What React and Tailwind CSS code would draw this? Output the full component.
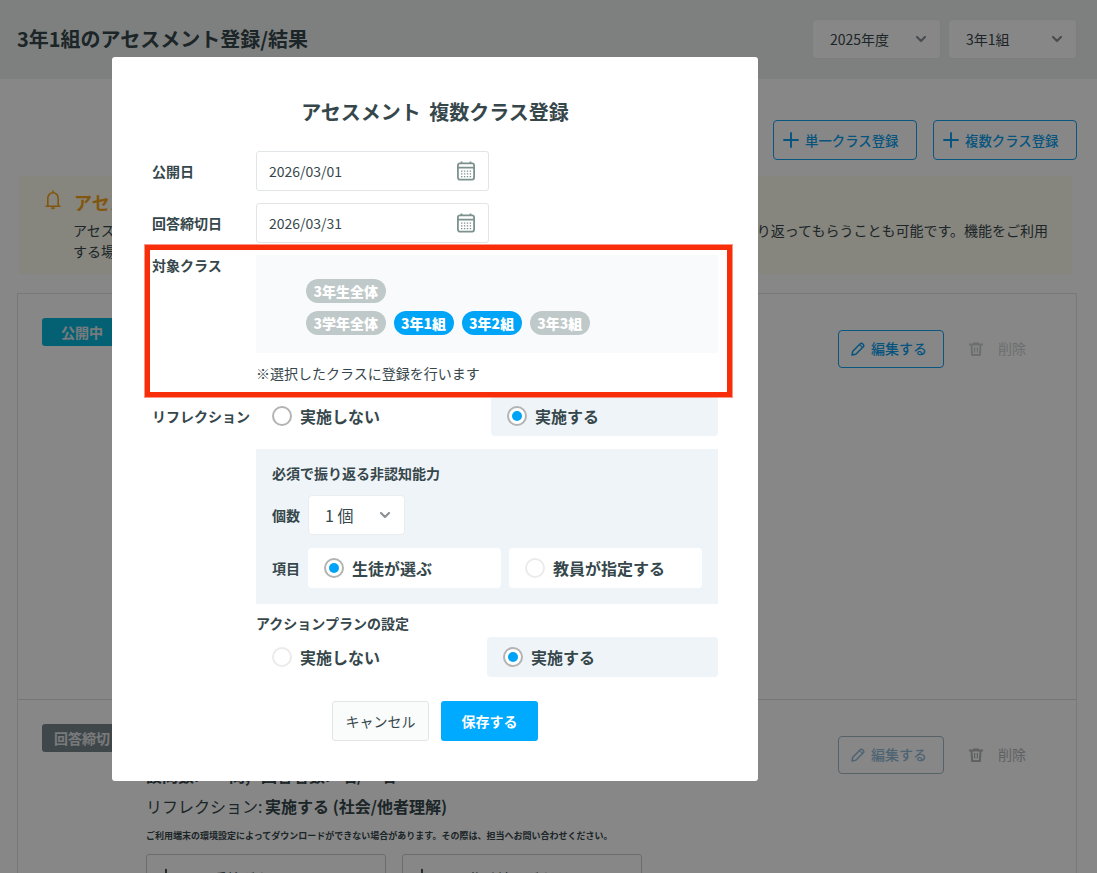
import React, { useState } from 'react';
import { ChevronDown, Download, Plus } from 'lucide-react';

const CalendarIcon = () => (
  <svg className="w-5 h-5 text-[#7d918f]" viewBox="0 0 20 20" fill="none" stroke="currentColor">
    <rect x="1.9" y="2.4" width="16.2" height="16.2" rx="2" strokeWidth="1.8" />
    <path d="M5.5 0.4v2M14.5 0.4v2M2 6.6h16" strokeWidth="1.8" />
    <path d="M5 10.2h10.5M5 12.9h10.5M5 15.6h10.5" strokeWidth="1.3" strokeDasharray="1.4 1.5" />
  </svg>
);

const BellIcon = () => (
  <svg className="w-4 h-5 text-[#f5a31a]" viewBox="0 0 16 20" fill="none" stroke="currentColor" strokeWidth="1.6">
    <path d="M0.5 16.2h15M2.8 16V8a5.2 5.2 0 0 1 10.4 0v8M8 0.6v2" />
    <path d="M6.3 18.2h3.4" strokeWidth="1.8" />
  </svg>
);

const PencilIcon = () => (
  <svg className="w-3.5 h-3.5" viewBox="0 0 14 14" fill="none" stroke="currentColor" strokeWidth="1.5" strokeLinejoin="round">
    <path d="M1 13l.8-3.8 7.4-7.5a1.6 1.6 0 0 1 2.3 0l.8.8a1.6 1.6 0 0 1 0 2.3L4.8 12.2 1 13z" />
    <path d="M8.6 2.6l2.8 2.8" strokeWidth="1.1" />
  </svg>
);

const TrashIcon = () => (
  <svg className="w-3.5 h-3.5" viewBox="0 0 14 14" fill="none" stroke="currentColor" strokeWidth="2">
    <path d="M0 2.4h14M4 1.6h6M2.5 2.8l.6 10.2h7.8l.6-10.2" />
    <path d="M5.6 5v5.5M8.4 5v5.5" strokeWidth="1.3" />
  </svg>
);

const Select = ({ value, className = '' }) => (
  <button className={`flex items-center justify-between bg-white border border-[#e9edee] rounded h-10 pr-[11px] ${className}`}>
    <span className="pb-px">{value}</span>
    <ChevronDown className="w-4 h-4 text-[#8b9296]" strokeWidth={3.2} />
  </button>
);

const AddButton = ({ label }) => (
  <button className="flex items-center h-10 w-36 pl-[5px] border border-[#12a4f2] rounded text-[#0d9fee] text-[13.4px] font-medium">
    <Plus className="w-6 h-6 mr-0.5" strokeWidth={1.9} />
    {label}
  </button>
);

const CardActions = ({ editable }) => (
  <div className="flex">
    <button
      className={`flex items-center h-[38px] w-[106px] pl-3 gap-1.5 border rounded text-sm font-medium ${
        editable ? 'border-[#12a4f2] text-[#0d9fee]' : 'border-[#a3b7c4] text-[#93bdd9]'
      }`}
    >
      <PencilIcon />
      <span className="pb-0.5">編集する</span>
    </button>
    <button className={`flex items-center h-[38px] w-[100px] ml-2 pl-[17px] gap-[15px] text-sm ${editable ? 'text-[#cdd2d4]' : 'text-[#b3b9bc]'}`}>
      <TrashIcon />
      <span className="pb-0.5">削除</span>
    </button>
  </div>
);

const DateInput = ({ value }) => (
  <div className="flex items-center justify-between w-[233px] h-10 pl-3 pr-3 border border-[#e2e5e7] rounded-[3px] bg-white text-sm">
    <span>{value}</span>
    <CalendarIcon />
  </div>
);

const Radio = ({ label, checked, faint, onChange, className = '' }) => (
  <button onClick={onChange} className={`flex items-center h-10 pl-4 rounded text-base font-bold ${className}`}>
    <span
      className={`w-5 h-5 mr-2 rounded-full bg-white flex items-center justify-center ${
        faint && !checked ? 'border-2 border-[#ebebeb]' : 'border-2 border-[#b3b3b3]'
      }`}
    >
      {checked && <span className="w-2.5 h-2.5 rounded-full bg-[#00a3f5]" />}
    </span>
    {label}
  </button>
);

const ClassTag = ({ label, selected, onClick }) => (
  <button
    onClick={onClick}
    className={`h-6 px-[7.5px] rounded-full text-sm leading-6 font-black text-white ${selected ? 'bg-[#00a5f7]' : 'bg-[#bfc9c9]'}`}
  >
    {label}
  </button>
);

const FieldLabel = ({ children }) => <div className="w-[104px] shrink-0 text-sm font-bold">{children}</div>;

const DownloadButton = ({ label }) => (
  <button className="flex items-center w-60 h-12 pl-2 gap-9 border border-[#c9ced1] rounded-[3px] text-sm">
    <Download className="w-[22px] h-[22px]" />
    {label}
  </button>
);

const AssessmentPage = () => (
  <div>
    <header className="flex items-start justify-between h-[79px] pl-[17px] pr-5 pt-[19px] bg-[#edf1ef]">
      <h1 className="text-xl leading-10 font-bold">3年1組のアセスメント登録/結果</h1>
      <div className="flex gap-[7px] text-sm">
        <Select value="2025年度" className="w-[129px] pl-[17px]" />
        <Select value="3年1組" className="w-[129px] pl-[17px]" />
      </div>
    </header>

    <div className="flex justify-end gap-4 pt-[41px] pr-5">
      <AddButton label="単一クラス登録" />
      <AddButton label="複数クラス登録" />
    </div>

    <section className="flex ml-[19px] mr-[25px] mt-4 h-[98px] pl-[26px] pr-6 pt-[14px] bg-[#fdfbee]">
      <BellIcon />
      <div className="ml-3 flex-1">
        <h2 className="pl-px text-lg leading-6 font-bold text-[#f5a31a]">アセスメントの登録</h2>
        <div className="flex justify-between text-sm leading-[21px] mt-1.5 whitespace-nowrap">
          <p>
            アセスメントを
            <br />
            する場合は
          </p>
          <p>り返ってもらうことも可能です。機能をご利用</p>
        </div>
      </div>
    </section>

    <main className="ml-[17px] mr-5 mt-[19px] border border-[#e2e5e6]">
      <section className="flex items-start justify-between h-[406px] border-b border-[#dcdfe0] pt-6 pl-6 pr-6">
        <span className="w-20 h-7 rounded-[3px] bg-[#08b8dc] text-[#e3e9ec] text-sm leading-7 font-bold text-center">公開中</span>
        <div className="pt-3">
          <CardActions editable />
        </div>
      </section>
      <section className="h-[260px] pt-6 pl-6 pr-6">
        <div className="flex items-start justify-between h-[40px]">
          <span className="w-[94px] h-7 pl-3 rounded-[3px] bg-[#7a878d] text-[#e3e6e8] text-sm leading-7 font-bold">回答締切</span>
          <div className="pt-3">
            <CardActions />
          </div>
        </div>
        <div className="ml-[104px]">
          <p className="flex text-base leading-[22px] font-bold">
            <span className="w-[83px]">設問数:</span>
            <span className="w-8">問,</span>
            <span className="w-20">回答者数:</span>
            <span className="w-[39px]">名/</span>
            <span>名</span>
          </p>
          <p className="text-base leading-6 mt-2">
            リフレクション: <b className="-ml-px">実施する (社会/他者理解)</b>
          </p>
          <p className="text-[9px] leading-4 mt-2.5 font-bold">
            ご利用端末の環境設定によってダウンロードができない場合があります。その際は、担当へお問い合わせください。
          </p>
          <div className="flex gap-4 mt-2.5">
            <DownloadButton label="受検ダウンロード" />
            <DownloadButton label="集計結果ダウンロード" />
          </div>
        </div>
      </section>
    </main>
  </div>
);

const RegisterModal = () => {
  const [selected, setSelected] = useState(['3年1組', '3年2組']);
  const [reflection, setReflection] = useState(true);
  const [chooser, setChooser] = useState('student');
  const [actionPlan, setActionPlan] = useState(true);

  const toggleClass = (name) => {
    setSelected((prev) => (prev.includes(name) ? prev.filter((n) => n !== name) : [...prev, name]));
  };

  return (
    <div className="relative w-[646px] h-[724px] px-10 pt-10 bg-white rounded-[3px]">
      <h2 className="text-center text-xl leading-[30px] font-bold [word-spacing:4px]">アセスメント 複数クラス登録</h2>

      <div className="flex items-center mt-6">
        <FieldLabel>公開日</FieldLabel>
        <DateInput value="2026/03/01" />
      </div>
      <div className="flex items-center mt-3">
        <FieldLabel>回答締切日</FieldLabel>
        <DateInput value="2026/03/31" />
      </div>

      <div className="flex mt-3 h-[141px]">
        <FieldLabel>対象クラス</FieldLabel>
        <div className="flex-1">
          <div className="h-[98px] pt-6 pl-[50px] bg-[#f9fafc]">
            <div className="flex">
              <ClassTag label="3年生全体" selected={selected.includes('3年生全体')} onClick={() => toggleClass('3年生全体')} />
            </div>
            <div className="flex gap-2 mt-2">
              {['3学年全体', '3年1組', '3年2組', '3年3組'].map((name) => (
                <ClassTag key={name} label={name} selected={selected.includes(name)} onClick={() => toggleClass(name)} />
              ))}
            </div>
          </div>
          <p className="mt-2.5 text-sm">※選択したクラスに登録を行います</p>
        </div>
      </div>

      <div className="flex items-center">
        <FieldLabel>リフレクション</FieldLabel>
        <Radio label="実施しない" checked={!reflection} onChange={() => setReflection(false)} className="w-[235px]" />
        <Radio label="実施する" checked={reflection} onChange={() => setReflection(true)} className="flex-1 bg-[#eff4f8]" />
      </div>

      <div className="ml-[104px] mt-[13px] h-[155px] pl-4 pt-[14px] bg-[#eff4f8]">
        <p className="text-sm font-bold">必須で振り返る非認知能力</p>
        <div className="flex items-center mt-3">
          <span className="w-9 text-sm font-bold">個数</span>
          <Select value="1 個" className="w-[97px] pl-4" />
        </div>
        <div className="flex items-center mt-[13px]">
          <span className="w-9 text-sm font-bold">項目</span>
          <Radio label="生徒が選ぶ" checked={chooser === 'student'} onChange={() => setChooser('student')} className="w-[193px] bg-white" />
          <Radio label="教員が指定する" faint checked={chooser === 'teacher'} onChange={() => setChooser('teacher')} className="w-[193px] ml-2 bg-white" />
        </div>
      </div>

      <div className="ml-[104px] mt-[9px]">
        <p className="text-sm font-bold">アクションプランの設定</p>
        <div className="flex mt-1">
          <Radio label="実施しない" faint checked={!actionPlan} onChange={() => setActionPlan(false)} className="w-[231px]" />
          <Radio label="実施する" checked={actionPlan} onChange={() => setActionPlan(true)} className="w-[231px] bg-[#eff4f8]" />
        </div>
      </div>

      <div className="flex justify-center gap-3 mt-6">
        <button className="w-[97px] h-10 border border-[#e1e5e8] rounded-[3px] bg-[#fafcfc] text-sm">キャンセル</button>
        <button className="w-[97px] h-10 rounded-[3px] bg-[#00aaff] text-sm font-bold text-white">保存する</button>
      </div>

      <div className="absolute left-[33px] top-[188px] w-[587px] h-[152px] border-5 border-[#f82e0b] shadow-[0_0_0_1px_rgba(248,46,11,0.5)] pointer-events-none" />
    </div>
  );
};

const App = () => {
  return (
    <div className="relative h-[873px] overflow-hidden bg-white text-[#36474b] font-['Noto_Sans_CJK_JP',sans-serif]">
      <AssessmentPage />
      <div className="absolute inset-0 bg-black/47 pl-28 pt-[57px]">
        <RegisterModal />
      </div>
    </div>
  );
};

export default App;
